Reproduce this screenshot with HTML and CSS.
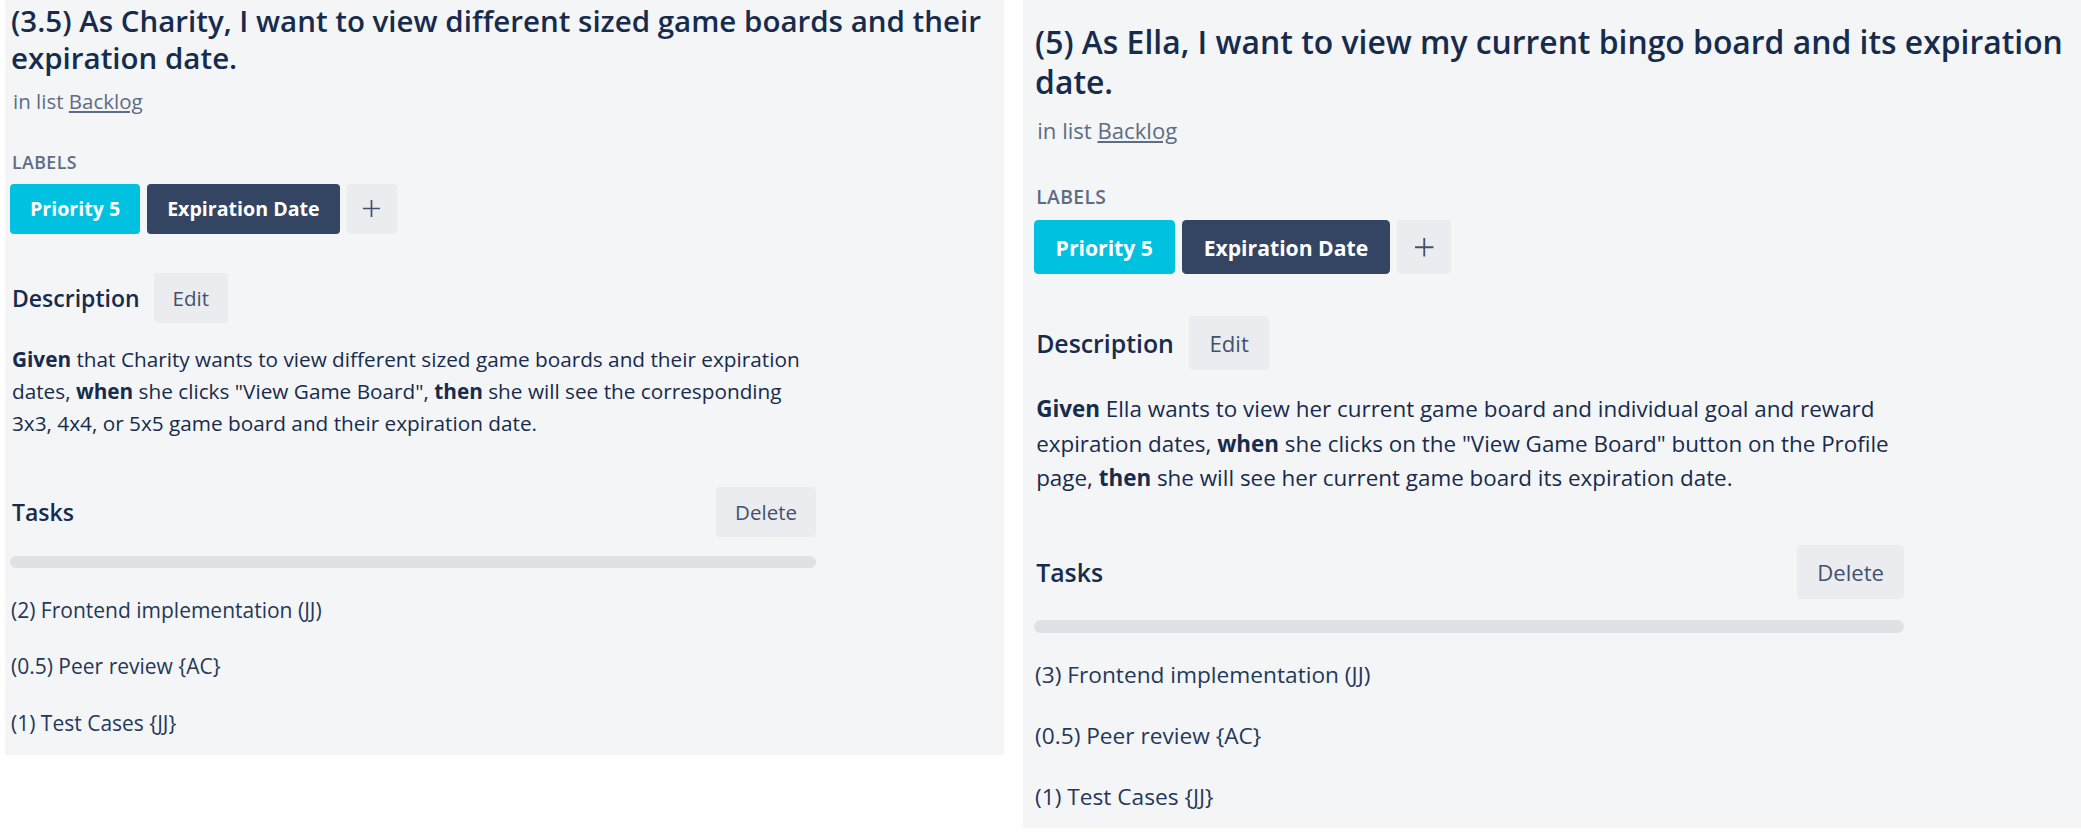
FILE: index.html
```html
<!DOCTYPE html>
<html lang="en">
<head>
<meta charset="utf-8">
<title>Card details</title>
<link rel="stylesheet" href="styles.css">
</head>
<body>
<div class="page">
  <section class="card card-a">
    <h1 class="card-title">(3.5) As Charity, I want to view different sized game boards and their expiration date.</h1>
    <p class="card-list">in list <a class="list-link">Backlog</a></p>
    <div class="main">
      <div class="labels">
        <h3 class="labels-title">Labels</h3>
        <div class="label-row">
          <span class="label label-sky">Priority 5</span>
          <span class="label label-dark">Expiration Date</span>
          <button class="label-add" aria-label="Add label"><svg class="plus" viewBox="0 0 20 20"><path d="M10 1v18M1 10h18"/></svg></button>
        </div>
      </div>
      <div class="section-head">
        <h2 class="section-title">Description</h2>
        <button class="btn">Edit</button>
      </div>
      <p class="desc"><b>Given</b> that Charity wants to view different sized game boards and their expiration dates, <b>when</b> she clicks "View Game Board", <b>then</b> she will see the corresponding 3x3, 4x4, or 5x5 game board and their expiration date.</p>
      <div class="section-head tasks-head">
        <h2 class="section-title">Tasks</h2>
        <button class="btn">Delete</button>
      </div>
      <div class="progress"></div>
      <ul class="tasks">
        <li>(2) Frontend implementation (JJ)</li>
        <li>(0.5) Peer review {AC}</li>
        <li>(1) Test Cases {JJ}</li>
      </ul>
    </div>
  </section>

  <section class="card card-b">
    <h1 class="card-title">(5) As Ella, I want to view my current bingo board and its expiration date.</h1>
    <p class="card-list">in list <a class="list-link">Backlog</a></p>
    <div class="main">
      <div class="labels">
        <h3 class="labels-title">Labels</h3>
        <div class="label-row">
          <span class="label label-sky">Priority 5</span>
          <span class="label label-dark">Expiration Date</span>
          <button class="label-add" aria-label="Add label"><svg class="plus" viewBox="0 0 20 20"><path d="M10 1v18M1 10h18"/></svg></button>
        </div>
      </div>
      <div class="section-head">
        <h2 class="section-title">Description</h2>
        <button class="btn">Edit</button>
      </div>
      <p class="desc"><b>Given</b> Ella wants to view her current game board and individual goal and reward expiration dates, <b>when</b> she clicks on the "View Game Board" button on the Profile page, <b>then</b> she will see her current game board its expiration date.</p>
      <div class="section-head tasks-head">
        <h2 class="section-title">Tasks</h2>
        <button class="btn">Delete</button>
      </div>
      <div class="progress"></div>
      <ul class="tasks">
        <li>(3) Frontend implementation (JJ)</li>
        <li>(0.5) Peer review {AC}</li>
        <li>(1) Test Cases {JJ}</li>
      </ul>
    </div>
  </section>
</div>
</body>
</html>
```

FILE: styles.css
```css
html, body {
  margin: 0;
  padding: 0;
  background: #ffffff;
}

.page {
  display: flex;
  align-items: flex-start;
  gap: 19px;
  padding-left: 5px;
  width: 2081px;
  box-sizing: border-box;
}

.card {
  --u: 1px;
  background: #f4f5f7;
  color: #172b4d;
  font-family: "Open Sans", "Noto Sans", Arial, sans-serif;
  box-sizing: border-box;
  overflow: hidden;
}

.card-a {
  width: 999px;
  height: 755px;
  padding: 2px 5px 0 5px;
}

.card-b {
  --u: 1.08px;
  flex: 1;
  height: 828px;
  padding: 22px 8px 0 11px;
}

.card-title {
  margin: 0;
  font-size: calc(29.5 * var(--u));
  line-height: calc(37 * var(--u));
  font-weight: 600;
  color: #172b4d;
  padding-left: calc(1 * var(--u));
}

.card-list {
  margin: calc(15 * var(--u)) 0 0 0;
  font-size: calc(20.5 * var(--u));
  line-height: calc(24 * var(--u));
  color: #5e6c84;
  padding-left: calc(3 * var(--u));
}

.card-a .card-list {
  margin-top: 13px;
}

.list-link {
  color: #5e6c84;
  text-decoration: underline;
}

.main {
  width: calc(806 * var(--u));
}

.labels {
  margin-top: calc(37 * var(--u));
}

.labels-title {
  margin: 0;
  font-size: calc(17.8 * var(--u));
  line-height: calc(24 * var(--u));
  font-weight: 600;
  text-transform: uppercase;
  letter-spacing: calc(0.4 * var(--u));
  color: #5e6c84;
  padding-left: calc(2 * var(--u));
}

.label-row {
  display: flex;
  gap: calc(7 * var(--u));
  margin-top: calc(9.6 * var(--u));
}

.label {
  display: flex;
  align-items: center;
  height: calc(50 * var(--u));
  padding: 0 calc(20 * var(--u));
  border-radius: calc(4 * var(--u));
  font-size: calc(19.6 * var(--u));
  font-weight: 700;
  color: #ffffff;
  box-sizing: border-box;
}

.label-sky {
  background: #00c2e0;
}

.label-dark {
  background: #344563;
}

.label-add {
  width: calc(50 * var(--u));
  height: calc(50 * var(--u));
  border: none;
  border-radius: calc(4 * var(--u));
  background: #ebecf0;
  display: flex;
  align-items: center;
  justify-content: center;
  padding: 0;
}

.plus {
  width: calc(19 * var(--u));
  height: calc(19 * var(--u));
  stroke: #42526e;
  stroke-width: 1.8;
  fill: none;
}

.section-head {
  display: flex;
  align-items: center;
  gap: calc(14 * var(--u));
  margin-top: calc(39 * var(--u));
}

.section-title {
  margin: 0;
  font-size: calc(23 * var(--u));
  font-weight: 600;
  color: #172b4d;
  padding-left: calc(2 * var(--u));
}

.btn {
  height: calc(50 * var(--u));
  padding: 0 calc(19 * var(--u));
  border: none;
  border-radius: calc(4 * var(--u));
  background: #ebecf0;
  color: #42526e;
  font-family: inherit;
  font-size: calc(20.5 * var(--u));
}

.desc {
  margin: calc(20 * var(--u)) 0 0 0;
  font-size: calc(20.75 * var(--u));
  line-height: calc(32 * var(--u));
  color: #172b4d;
  padding-left: calc(2 * var(--u));
}

.desc b {
  font-weight: 700;
}

.tasks-head {
  justify-content: space-between;
  margin-top: calc(48 * var(--u));
}

.card-b .tasks-head {
  margin-top: calc(46 * var(--u));
}

.progress {
  margin-top: calc(19 * var(--u));
  height: calc(12 * var(--u));
  border-radius: calc(6 * var(--u));
  background: #dfe1e6;
}

.tasks {
  list-style: none;
  margin: calc(14 * var(--u)) 0 0 0;
  padding: 0;
}

.card-b .tasks {
  margin-top: calc(10 * var(--u));
}

.tasks li {
  font-size: calc(21 * var(--u));
  line-height: calc(32.5 * var(--u));
  padding: calc(12 * var(--u)) 0 calc(12 * var(--u)) calc(1 * var(--u));
  color: #253858;
}
```
